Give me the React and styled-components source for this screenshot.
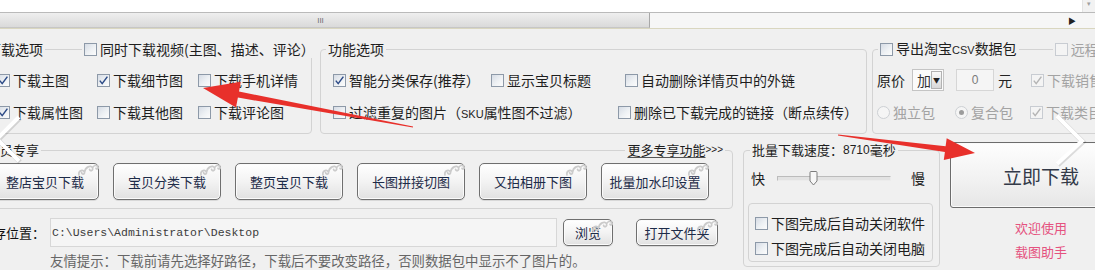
import React from "react";
import styled, { createGlobalStyle } from "styled-components";

const GlobalStyle = createGlobalStyle`
  html, body { margin: 0; padding: 0; background: #fff; }
  body {
    font-family: "Noto Sans CJK SC", "Noto Sans", sans-serif;
    font-size: 14px;
    color: #222;
  }
`;

const Screen = styled.div`
  position: relative;
  width: 1095px;
  height: 270px;
  overflow: hidden;
  background: #fff;
`;

// ---- top strip + horizontal scrollbar
const TopBlank = styled.div`
  height: 12px;
  display: flex;
  justify-content: flex-end;
`;

const VStub = styled.div`
  width: 12px;
  background: #f2f2f2;
  border-left: 1px solid #e4e4e4;
  color: #a0a0a0;
  font-size: 7px;
  line-height: 7px;
  text-align: center;
`;

const HScroll = styled.div`
  height: 15px;
  display: flex;
  border-top: 1px solid #bababa;
  background: #f6f6f6;
`;

const ScrollThumb = styled.div`
  width: 650px;
  box-sizing: border-box;
  border-right: 1px solid #a8a8a8;
  border-bottom: 1px solid #c6c6c6;
  background: linear-gradient(#efefef, #dadada);
  display: flex;
  justify-content: center;
  align-items: center;
  padding-right: 8px;
  font-family: "Liberation Sans", sans-serif;
  font-size: 8px;
  color: #707070;
`;

const ScrollTrack = styled.div`
  flex: 1;
`;

const ScrollArrow = styled.div`
  width: 22px;
  display: flex;
  align-items: center;
  justify-content: center;
  font-size: 8px;
  color: #222;
  margin-right: 12px;
`;

// ---- main panel
const Panel = styled.div`
  height: 241px;
  border-top: 1px solid #d9d6bf;
  background: #f0f0f0;
`;

const Content = styled.div`
  margin-left: -20px;
  padding-top: 20px;
`;

const GroupRow = styled.div`
  display: flex;
  gap: ${(p) => p.$gap}px;
`;

const Group = styled.div`
  box-sizing: border-box;
  flex: none;
  width: ${(p) => p.$w}px;
  height: ${(p) => p.$h}px;
  border: 1px solid #d3d3d3;
  border-radius: 4px;
  display: flex;
  flex-direction: column;
`;

const Legend = styled.div`
  display: flex;
  align-items: center;
  height: 18px;
  margin: -10px ${(p) => p.$right || 0}px 0 ${(p) => p.$left}px;
  gap: ${(p) => p.$gap || 0}px;
`;

const LegendItem = styled.div`
  display: flex;
  align-items: center;
  padding: 0 2px;
  background: #f0f0f0;
  line-height: 18px;
  font-size: ${(p) => p.$size || 14}px;
  white-space: nowrap;
  color: #1e1e1e;
  margin-left: ${(p) => (p.$push ? "auto" : "0")};
`;

const MoreLink = styled.span`
  text-decoration: underline;
  text-underline-offset: 2px;
  text-decoration-color: #555;
`;

const Rows = styled.div`
  display: flex;
  flex-direction: column;
  gap: 10px;
  margin-top: 11px;
  padding-left: ${(p) => p.$pad}px;
`;

const Row = styled.div`
  display: flex;
  align-items: center;
  height: 22px;
  white-space: nowrap;
`;

const Cell = styled.div`
  flex: none;
  display: flex;
  align-items: center;
  width: ${(p) => (p.$w ? `${p.$w}px` : "auto")};
  margin-left: ${(p) => p.$ml || 0}px;
`;

const Small = styled.span`
  font-family: "Liberation Sans", sans-serif;
  font-size: ${(p) => p.$size || 11}px;
`;

// ---- checkbox / radio
const BoxEl = styled.span`
  box-sizing: border-box;
  width: 13px;
  height: 13px;
  flex: none;
  border: 1px solid ${(p) => (p.$off ? "#c8ccd2" : "#8d99a8")};
  background: ${(p) =>
    p.$off
      ? "#f4f4f4"
      : "linear-gradient(135deg, #d6dce5 0%, #eef1f4 55%, #fcfcfc 100%)"};
  display: flex;
  align-items: center;
  justify-content: center;
`;

const Label = styled.span`
  margin-left: 3px;
  color: ${(p) => (p.$off ? "#a3a3a3" : "#1e1e1e")};
`;

function Check({ on, off, children }) {
  return (
    <>
      <BoxEl $off={off}>
        {on && (
          <svg width="11" height="11" viewBox="0 0 11 11">
            <path
              d="M1.8 5.6 L4.2 8.6 L9.4 1.6"
              stroke={off ? "#b4b4b4" : "#2c4a86"}
              strokeWidth="1.5"
              fill="none"
            />
          </svg>
        )}
      </BoxEl>
      {children && <Label $off={off}>{children}</Label>}
    </>
  );
}

const RadioEl = styled.span`
  box-sizing: border-box;
  width: 13px;
  height: 13px;
  flex: none;
  border-radius: 50%;
  border: 1px solid #cdd0d4;
  background: #f5f5f5;
  display: flex;
  align-items: center;
  justify-content: center;
  &::after {
    content: "";
    width: 5px;
    height: 5px;
    border-radius: 50%;
    background: ${(p) => (p.$on ? "#9c9c9c" : "transparent")};
  }
`;

// ---- small form fields
const Select = styled.div`
  box-sizing: border-box;
  width: 32px;
  height: 22px;
  margin-left: 7px;
  border: 1px solid #c4c4c4;
  background: #fbfbfb;
  display: flex;
  align-items: center;
  justify-content: space-between;
  padding-left: 4px;
  color: #333;
`;

const SelectBtn = styled.span`
  box-sizing: border-box;
  width: 11px;
  height: 18px;
  margin-right: 1px;
  border: 1px solid #b2b2b2;
  background: linear-gradient(#fafafa, #d8d8d8);
  font-size: 7px;
  display: flex;
  align-items: center;
  justify-content: center;
  color: #222;
`;

const NumInput = styled.div`
  box-sizing: border-box;
  width: 38px;
  height: 22px;
  margin: 0 4px 0 12px;
  border: 1px solid #d6d6d6;
  background: #f5f5f5;
  display: flex;
  align-items: center;
  justify-content: center;
  font-family: "Liberation Sans", sans-serif;
  font-size: 12px;
  color: #7a7a7a;
`;

// ---- lower area
const LeftCol = styled.div`
  flex: none;
  width: 753px;
`;

const ButtonsRow = styled.div`
  display: flex;
  gap: 14px;
  margin-top: 4px;
  padding-left: 10px;
`;

const FeatureButton = styled.div`
  position: relative;
  box-sizing: border-box;
  flex: none;
  width: ${(p) => p.$w}px;
  height: ${(p) => p.$h}px;
  margin-left: ${(p) => p.$ml || 0}px;
  border: 1px solid #6f6f6f;
  border-radius: 5px;
  background: linear-gradient(#ffffff, #f3f3f3 50%, #e1e1e1);
  box-shadow: inset 0 0 0 1px #fbfbfb, 0 1px 0 #d8d8d8;
  display: flex;
  align-items: center;
  justify-content: center;
  font-size: 13px;
  color: #1d2b48;
  white-space: nowrap;
`;

const OrnamentWrap = styled.span`
  position: absolute;
  top: -1px;
  right: -1px;
  display: flex;
`;

function Ornament() {
  return (
    <OrnamentWrap>
      <svg width="22" height="14" viewBox="0 0 22 14">
        <path
          d="M2 12 C1 7 7 6 7.5 9.5 C7.8 11.5 4.6 11.6 4.6 9.6 M7.5 9.5 C8 4 14 1.5 15.5 5 C16.6 7.8 12.8 8.6 12.6 6.4 M15.5 5 C16.5 2.2 20 1.4 21 4.2 C21.6 6 19.4 6.6 19 5.2"
          stroke="#cbcbcb"
          strokeWidth="1.7"
          fill="none"
          strokeLinecap="round"
        />
      </svg>
    </OrnamentWrap>
  );
}

const PathRow = styled.div`
  display: flex;
  align-items: center;
  height: 29px;
  margin-top: 9px;
`;

const PathLabel = styled.div`
  width: 70px;
  flex: none;
  font-size: 13px;
  color: #111;
  white-space: nowrap;
`;

const PathInput = styled.div`
  box-sizing: border-box;
  width: 507px;
  height: 29px;
  flex: none;
  border: 1px solid #d7d7d7;
  background: #f5f5f5;
  padding-left: 1px;
  display: flex;
  align-items: center;
  font-family: "Liberation Mono", monospace;
  font-size: 11.5px;
  color: #3c3c3c;
`;

const Hint = styled.div`
  margin-top: 3px;
  padding-left: 70px;
  line-height: 20px;
  font-size: 13.4px;
  color: #666;
  white-space: nowrap;
`;

const SliderRow = styled.div`
  display: flex;
  align-items: center;
  height: 22px;
  margin-top: 8px;
  padding-left: 7px;
  font-size: 14px;
`;

const SliderTrack = styled.div`
  position: relative;
  box-sizing: border-box;
  width: 114px;
  height: 5px;
  margin: 0 20px 0 12px;
  border: 1px solid #bcbcbc;
  border-bottom-color: #ececec;
  border-right-color: #ececec;
  background: #e3e3e3;
`;

const SliderKnob = styled.svg`
  position: absolute;
  left: 31px;
  top: -6px;
`;

const InnerBox = styled.div`
  box-sizing: border-box;
  width: 185px;
  height: 59px;
  margin: 14px 0 0 4px;
  border: 1px solid #d3d3d3;
  border-radius: 4px;
  padding: 9px 0 0 6px;
  display: flex;
  flex-direction: column;
  gap: 5px;
`;

const ShortRow = styled.div`
  display: flex;
  align-items: center;
  height: 20px;
  white-space: nowrap;
  font-size: 14px;
`;

const RightCol = styled.div`
  flex: none;
  width: 182px;
  margin-top: -8px;
`;

const BigButton = styled.div`
  box-sizing: border-box;
  height: 66px;
  border: 1px solid #6c6c6c;
  border-radius: 3px;
  background: linear-gradient(#fefefe, #f2f2f2 55%, #e6e6e6);
  box-shadow: inset 0 0 0 1px #fafafa;
  display: flex;
  align-items: center;
  justify-content: center;
  font-size: 19px;
  color: #333a48;
`;

const Welcome = styled.div`
  margin-top: 8px;
  text-align: center;
  font-size: 13px;
  line-height: 24px;
  color: #e5527f;
`;

const Overlay = styled.svg`
  position: absolute;
  left: 0;
  top: 0;
  pointer-events: none;
`;

export default function App() {
  return (
    <Screen>
      <GlobalStyle />
      <TopBlank>
        <VStub>▾</VStub>
      </TopBlank>
      <HScroll>
        <ScrollThumb>III</ScrollThumb>
        <ScrollTrack />
        <ScrollArrow>▶</ScrollArrow>
      </HScroll>

      <Panel>
        <Content>
          <GroupRow $gap={0}>
            <Group $w={332} $h={85}>
              <Legend $left={4} $gap={37}>
                <LegendItem>下载选项</LegendItem>
                <LegendItem>
                  <Check>同时下载视频(主图、描述、评论）</Check>
                </LegendItem>
              </Legend>
              <Rows $pad={16}>
                <Row>
                  <Cell $w={100}><Check on>下载主图</Check></Cell>
                  <Cell $w={101}><Check on>下载细节图</Check></Cell>
                  <Cell><Check>下载手机详情</Check></Cell>
                </Row>
                <Row>
                  <Cell $w={100}><Check on>下载属性图</Check></Cell>
                  <Cell $w={101}><Check>下载其他图</Check></Cell>
                  <Cell><Check>下载评论图</Check></Cell>
                </Row>
              </Rows>
            </Group>

            <Group $w={547} $h={85} style={{ marginLeft: 8 }}>
              <Legend $left={5}>
                <LegendItem>功能选项</LegendItem>
              </Legend>
              <Rows $pad={12}>
                <Row>
                  <Cell $w={158}><Check on>智能分类保存(推荐）</Check></Cell>
                  <Cell $w={134}><Check>显示宝贝标题</Check></Cell>
                  <Cell><Check>自动删除详情页中的外链</Check></Cell>
                </Row>
                <Row>
                  <Cell $w={285}>
                    <Check>
                      过滤重复的图片（<Small>SKU</Small>属性图不过滤）
                    </Check>
                  </Cell>
                  <Cell><Check>删除已下载完成的链接（断点续传）</Check></Cell>
                </Row>
              </Rows>
            </Group>

            <Group $w={260} $h={85} style={{ marginLeft: 5 }}>
              <Legend $left={5} $gap={34}>
                <LegendItem>
                  <Check>
                    导出淘宝<Small>CSV</Small>数据包
                  </Check>
                </LegendItem>
                <LegendItem>
                  <Check off>远程</Check>
                </LegendItem>
              </Legend>
              <Rows $pad={4}>
                <Row>
                  <Cell>原价</Cell>
                  <Select>
                    加<SelectBtn>▼</SelectBtn>
                  </Select>
                  <NumInput>0</NumInput>
                  <Cell>元</Cell>
                  <Cell $ml={19}><Check on off>下载销售</Check></Cell>
                </Row>
                <Row>
                  <Cell $w={78}>
                    <RadioEl />
                    <Label $off>独立包</Label>
                  </Cell>
                  <Cell $w={75}>
                    <RadioEl $on />
                    <Label $off>复合包</Label>
                  </Cell>
                  <Cell><Check on off>下载类目</Check></Cell>
                </Row>
              </Rows>
            </Group>
          </GroupRow>

          <GroupRow $gap={10} style={{ marginTop: 16 }}>
            <LeftCol>
              <Group $w={753} $h={59}>
                <Legend $left={4} $right={7}>
                  <LegendItem $size={13}>会员专享</LegendItem>
                  <LegendItem $size={13} $push>
                    <MoreLink>更多专享功能</MoreLink>
                    <Small $size={10}>&gt;&gt;&gt;</Small>
                  </LegendItem>
                </Legend>
                <ButtonsRow>
                  {["整店宝贝下载", "宝贝分类下载", "整页宝贝下载", "长图拼接切图", "又拍相册下图", "批量加水印设置"].map(
                    (t) => (
                      <FeatureButton key={t} $w={108} $h={37}>
                        {t}
                        <Ornament />
                      </FeatureButton>
                    )
                  )}
                </ButtonsRow>
              </Group>
              <PathRow>
                <PathLabel>保存位置：</PathLabel>
                <PathInput>C:\Users\Administrator\Desktop</PathInput>
                <FeatureButton $w={50} $h={27} $ml={6}>
                  浏览
                  <Ornament />
                </FeatureButton>
                <FeatureButton $w={82} $h={27} $ml={23}>
                  打开文件夹
                  <Ornament />
                </FeatureButton>
              </PathRow>
              <Hint>
                友情提示：下载前请先选择好路径，下载后不要改变路径，否则数据包中显示不了图片的。
              </Hint>
            </LeftCol>

            <Group $w={197} $h={117}>
              <Legend $left={6}>
                <LegendItem $size={13}>
                  批量下载速度：<Small $size={12}>8710</Small>毫秒
                </LegendItem>
              </Legend>
              <SliderRow>
                快
                <SliderTrack>
                  <SliderKnob width="9" height="15" viewBox="0 0 9 15">
                    <path
                      d="M1 1.5 Q1 0.5 2 0.5 H7 Q8 0.5 8 1.5 V10 L4.5 14 L1 10 Z"
                      fill="#f7f7f7"
                      stroke="#7c7c7c"
                    />
                  </SliderKnob>
                </SliderTrack>
                慢
              </SliderRow>
              <InnerBox>
                <ShortRow><Check>下图完成后自动关闭软件</Check></ShortRow>
                <ShortRow><Check>下图完成后自动关闭电脑</Check></ShortRow>
              </InnerBox>
            </Group>

            <RightCol>
              <BigButton>立即下载</BigButton>
              <Welcome>
                欢迎使用
                <br />
                载图助手
              </Welcome>
            </RightCol>
          </GroupRow>
        </Content>
      </Panel>

      <Overlay width="1095" height="270" viewBox="0 0 1095 270">
        <polyline points="19,117 -3,139 19,161" fill="none" stroke="rgba(0,0,0,0.12)" strokeWidth="5" transform="translate(1 1)" />
        <polyline points="19,117 -3,139 19,161" fill="none" stroke="#ffffff" strokeWidth="4" />
        <polyline points="1057,116 1082,141 1057,164" fill="none" stroke="rgba(0,0,0,0.12)" strokeWidth="5" transform="translate(1 1)" />
        <polyline points="1057,116 1082,141 1057,164" fill="none" stroke="#ffffff" strokeWidth="4" />
        <polygon
          points="413.1,126.4 239,91.6 240.8,81.8 203,88 236,107.4 237.9,97.6 412.9,127.6"
          fill="#e8302b"
        />
        <polygon
          points="838.1,134.4 945.6,146.3 946.7,138.2 975,153 943.8,160 944.9,151.9 837.9,135.6"
          fill="#e8302b"
        />
      </Overlay>
    </Screen>
  );
}
